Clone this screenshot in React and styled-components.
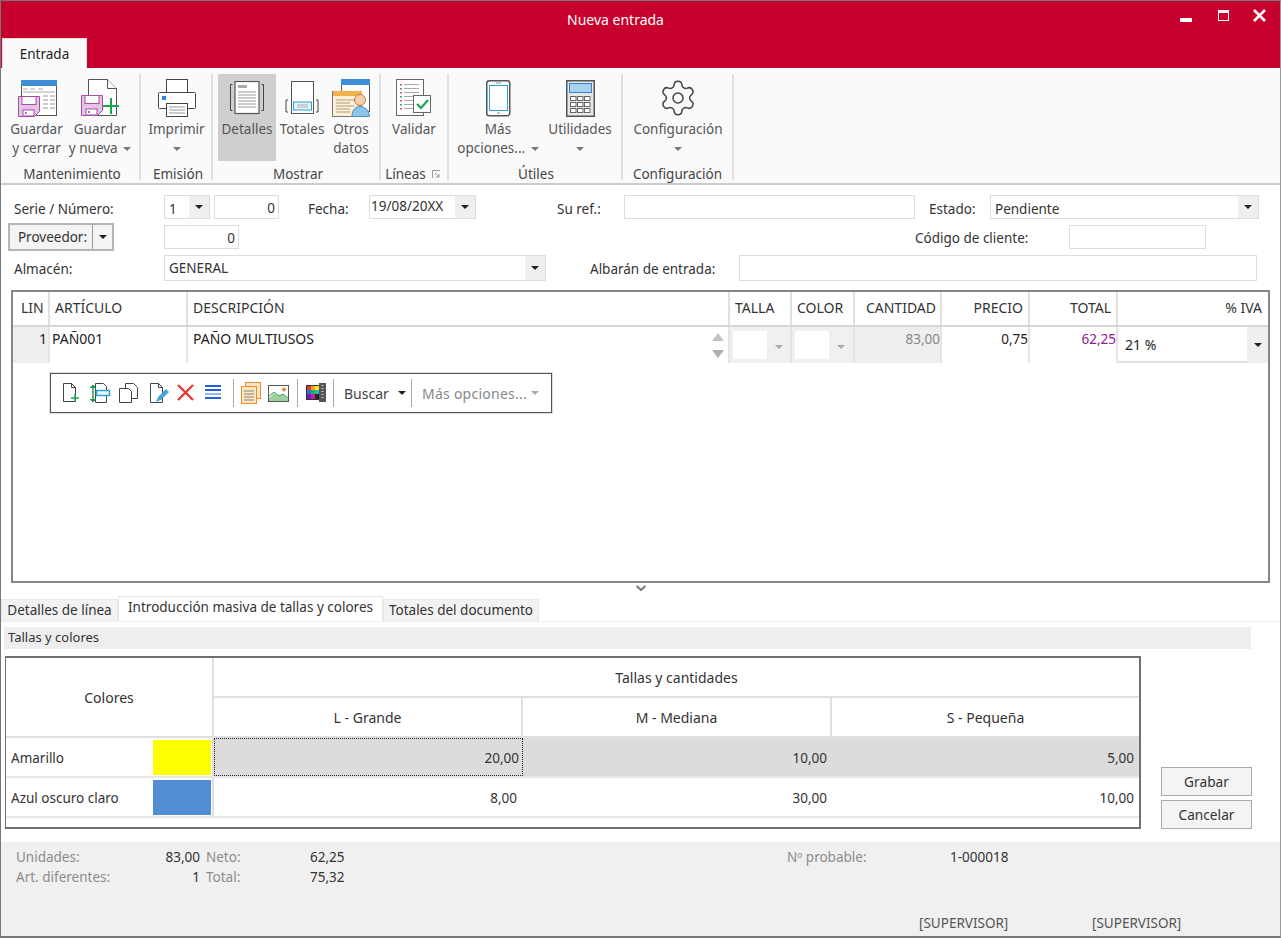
import React from 'react';
import styled, { createGlobalStyle } from 'styled-components';
import { Settings } from 'lucide-react';

const Global = createGlobalStyle`
  html, body { margin: 0; padding: 0; background: #fff; }
  * { box-sizing: border-box; }
`;

const Win = styled.div`
  width: 1281px; height: 938px; overflow: hidden; background: #fff;
  border: 1px solid #777; border-bottom-width: 2px; border-right: 1px solid #999;
  font-family: "Noto Sans", "Open Sans", sans-serif; font-size: 13.5px; color: #333;
  display: flex; flex-direction: column;
`;
const TitleBar = styled.div`
  height: 67px; background: #c8002d; flex: none; display: flex; flex-direction: column;
`;
const TitleRow = styled.div`
  height: 37px; display: flex; align-items: center; justify-content: center; position: relative;
  color: #fff; font-size: 14px; padding: 0 50px 1px 0;
`;
const WinControls = styled.div`
  position: absolute; right: 0; top: 0; height: 30px; display: flex; align-items: center;
`;
const RibbonTabs = styled.div`flex: 1; display: flex; align-items: flex-end; padding-left: 1px;`;
const RibbonTab = styled.div`
  width: 85px; height: 30px; background: #fafafa; border: 1px solid #ddd; border-bottom: 0;
  display: flex; align-items: center; justify-content: center; color: #222; font-size: 13.5px;
`;
const Ribbon = styled.div`
  height: 117px; flex: none; background: #fafafa; border-bottom: 2px solid #ccc; display: flex; padding-top: 6px;
`;
const Group = styled.div`
  width: ${p => p.$w}px; height: 106px; border-right: 2px solid #e0e0e0; display: flex; flex-direction: column;
  padding-left: ${p => p.$pl || 0}px;
`;
const GroupButtons = styled.div`height: 91px; display: flex; flex: none;`;
const GroupLabel = styled.div`
  flex: 1; display: flex; align-items: center; justify-content: center; gap: 6px; color: #444; padding-right: ${p => p.$pr || 0}px;
`;
const RibbonBtn = styled.div`
  width: ${p => p.$w}px; height: 87px; margin-left: ${p => p.$ml || 0}px; display: flex; flex-direction: column; align-items: center;
  background: ${p => p.$on ? '#cfcfcf' : 'transparent'}; color: #555; line-height: 19px; text-align: center; padding-top: 2px;
`;
const IconSlot = styled.div`height: 44px; flex: none; display: flex; align-items: center; justify-content: center; width: 100%; padding-left: ${p => p.$pl || 0}px;`;
const BtnText = styled.div`white-space: nowrap;`;
const Caret = styled.span`
  display: inline-block; width: 0; height: 0; border-left: 4px solid transparent; border-right: 4px solid transparent;
  border-top: 4px solid ${p => p.$c || '#777'}; vertical-align: middle; margin-left: ${p => p.$ml || 0}px;
`;

const Form = styled.div`
  display: flex; flex-direction: column; flex: none; padding-top: 10px; height: 105px;
`;
const FormRow = styled.div`
  height: ${p => p.$h}px; display: flex; align-items: center; padding-left: ${p => p.$pl ?? 13}px; flex: none;
`;
const Label = styled.div`
  width: ${p => p.$w}px; margin-left: ${p => p.$ml || 0}px; padding-top: ${p => p.$pt ?? 1}px; flex: none; color: #333; white-space: nowrap;
`;
const Input = styled.div`
  width: ${p => p.$w}px; height: ${p => p.$h || 24}px; margin-left: ${p => p.$ml || 0}px; flex: none; background: #fff; border: 1px solid #ddd;
  text-align: right; padding-right: 3px; line-height: 24px; color: #333;
`;
const Combo = styled.div`
  width: ${p => p.$w}px; height: ${p => p.$h || 24}px; margin-left: ${p => p.$ml || 0}px; flex: none; background: #fff; border: 1px solid #ddd;
  display: flex; align-items: stretch; padding-left: ${p => p.$pl ?? 4}px; color: #333;
`;
const ComboText = styled.div`flex: 1; white-space: nowrap; line-height: ${p => p.$lh || 24}px;`;
const ComboArrow = styled.div`
  width: 20px; background: #efefef; display: flex; align-items: center; justify-content: center;
`;
const SplitButton = styled.div`
  width: 106px; height: 28px; margin-right: 50px; border: 2px solid #b5b5b5; background: #f4f4f4; display: flex; flex: none;
`;
const SplitMain = styled.div`flex: 1; display: flex; align-items: center; justify-content: center; border-right: 1px solid #999; color: #333; padding-left: 3px;`;
const SplitArrow = styled.div`width: 19px; display: flex; align-items: center; justify-content: center;`;

const GridBox = styled.div`
  margin: 0 0 0 10px; width: 1259px; height: 293px; flex: none; border: 2px solid #868686; background: #fff;
  display: flex; flex-direction: column; font-size: 14px;
`;
const cols = '37px 138px 542px 62px 63px 87px 88px 88px 1fr';
const HeaderRow = styled.div`
  display: grid; grid-template-columns: ${cols}; height: 35px; flex: none; border-bottom: 2px solid #d6d6d6; color: #333;
`;
const HeadCell = styled.div`
  border-right: ${p => p.$last ? 0 : '2px solid #e0e0e0'}; padding: 0 ${p => p.$pr ?? 5}px 0 ${p => p.$pl ?? 5}px; line-height: 31px;
  text-align: ${p => p.$right ? 'right' : 'left'}; white-space: nowrap;
`;
const DataRow = styled.div`
  display: grid; grid-template-columns: ${cols}; height: 36px; flex: none; border-bottom: 2px solid #e0e0e0; color: #222;
`;
const DataCell = styled.div`
  border-right: 2px solid #e4e4e4; background: ${p => p.$bg || '#fff'}; color: ${p => p.$c || '#222'}; font-size: ${p => p.$fs || 14}px;
  text-align: ${p => p.$right ? 'right' : 'left'}; padding: 0 ${p => p.$pr ?? 0}px 0 ${p => p.$pl ?? 2}px; line-height: 24px; white-space: nowrap; position: relative;
`;
const DescCell = styled(DataCell)`display: flex; justify-content: space-between; padding-left: 5px;`;
const Spin = styled.div`width: 20px; display: flex; flex-direction: column; align-items: center; justify-content: center; gap: 9px; background: #fff;`;
const Tri = styled.span`
  width: 0; height: 0; border-left: 6px solid transparent; border-right: 6px solid transparent;
  ${p => p.$up ? 'border-bottom: 8px solid #c4c4c4;' : 'border-top: 8px solid #b0b0b0;'}
`;
const DisabledCombo = styled.div`
  background: #f0f0f0; border-right: 2px solid #e4e4e4; display: flex; align-items: center; padding: 0 0 0 3px; height: 100%;
`;
const WhiteBox = styled.div`width: ${p => p.$w}px; height: 28px; background: #fff; flex: none;`;
const DisabledArrow = styled.div`flex: 1; display: flex; justify-content: center; padding-top: 4px;`;
const IvaCell = styled.div`
  display: flex; align-items: stretch; padding-left: 7px; color: #222;
`;
const IvaText = styled.div`flex: 1; line-height: 36px;`;
const IvaArrow = styled.div`width: 21px; background: #efefef; display: flex; align-items: center; justify-content: center;`;

const FloatBar = styled.div`
  width: 502px; height: 40px; margin: 10px 0 0 37px; flex: none; border: 1px solid #555; background: #fff; display: flex; align-items: center; padding-left: 9px;
  box-shadow: 0 0 0 1px #ddd;
`;
const ToolIcon = styled.svg`width: 22px; height: 22px; flex: none; margin-right: ${p => p.$mr ?? 7}px;`;
const ToolSep = styled.div`width: 1px; height: 28px; background: #aaa; flex: none; margin: 0 ${p => p.$mr ?? 6}px 0 ${p => p.$ml ?? 0}px;`;
const ToolText = styled.div`
  color: ${p => p.$c || '#444'}; width: ${p => p.$w}px; flex: none; display: flex; align-items: center; justify-content: space-between; white-space: nowrap; padding-left: 4px; padding-right: 5px; letter-spacing: ${p => p.$ls || 0}px;
`;

const Chevron = styled.div`height: 14px; flex: none; display: flex; justify-content: center;`;
const Tabs = styled.div`display: flex; height: 25px; flex: none; align-items: flex-end; border-bottom: 1px solid #eee;`;
const Tab = styled.div`
  height: ${p => p.$on ? 25 : 22}px; width: ${p => p.$w}px; background: ${p => p.$on ? '#fff' : '#f2f2f2'}; border: 1px solid ${p => p.$on ? '#e4e4e4' : '#e8e8e8'}; border-bottom: 0;
  display: flex; justify-content: center; align-items: ${p => p.$on ? 'flex-start' : 'center'}; line-height: 21px; color: #333; white-space: nowrap;
`;
const SectionBar = styled.div`
  margin: 5px 0 0 3px; width: 1247px; height: 22px; flex: none; background: #eee; line-height: 21px; padding-left: 4px; color: #333; font-size: 13px;
`;
const Bottom = styled.div`display: flex; margin: 7px 0 0 4px; align-items: flex-end; flex: none;`;
const SizeGrid = styled.div`
  width: 1136px; height: 173px; border: 2px solid #707070; border-left-width: 1px; display: flex; flex-direction: column; background: #fff; flex: none; font-size: 14px;
`;
const SizeHead = styled.div`display: flex; height: 80px; flex: none; border-bottom: 2px solid #e0e0e0;`;
const ColorsHead = styled.div`width: 208px; flex: none; border-right: 2px solid #e0e0e0; display: flex; align-items: center; justify-content: center; color: #333;`;
const SizesHead = styled.div`flex: 1; display: flex; flex-direction: column;`;
const SizesTitle = styled.div`height: 40px; display: flex; align-items: center; justify-content: center; border-bottom: 2px solid #e0e0e0; color: #333;`;
const SizesRow = styled.div`flex: 1; display: grid; grid-template-columns: 309px 309px 1fr;`;
const SizeCol = styled.div`display: flex; align-items: center; justify-content: center; border-right: ${p => p.$last ? 0 : '2px solid #e0e0e0'}; color: #333;`;
const ColorRow = styled.div`display: flex; height: 40px; flex: none; border-bottom: 2px solid #e8e8e8;`;
const ColorName = styled.div`
  width: 208px; flex: none; border-right: 2px solid #e0e0e0; display: flex; align-items: center; justify-content: space-between; padding: 2px 1px 2px 5px; color: #333; font-size: 13.5px;
`;
const ColorLabel = styled.span`padding-top: 2px;`;
const Swatch = styled.div`width: 58px; height: 35px; background: ${p => p.$c}; flex: none;`;
const Qtys = styled.div`flex: 1; display: grid; grid-template-columns: 309px 309px 1fr; background: ${p => p.$bg || '#fff'}; font-size: 13.5px;`;
const Qty = styled.div`
  display: flex; align-items: center; justify-content: flex-end; padding: 2px ${p => p.$pr ?? 3}px 0 0; color: #333; border: 1px ${p => p.$focus ? 'dotted #222' : 'solid transparent'};
`;
const SideButtons = styled.div`display: flex; flex-direction: column; gap: 4px; margin-left: 20px;`;
const PushButton = styled.div`
  width: 91px; height: 29px; background: #f4f4f4; border: 1px solid #aaa; display: flex; align-items: center; justify-content: center; color: #333; font-size: 13.7px;
`;
const Footer = styled.div`
  flex: 1; margin-top: 13px; background: #f0f0f0; padding: 5px 0 0 15px; display: flex; flex-direction: column; line-height: 20px;
`;
const FootRow = styled.div`display: grid; grid-template-columns: 190px 104px 477px 163px 1fr;`;
const FootPair = styled.div`display: flex; justify-content: space-between; padding-right: 6px;`;
const Muted = styled.span`color: #8c8c8c;`;
const Val = styled.span`color: #333;`;
const Users = styled.div`display: flex; margin-top: 26px; padding-left: 903px; color: #555;`;
const UserName = styled.div`width: 173px;`;

const W = ({ children, ...p }) => <svg {...p}>{children}</svg>;

const Floppy = ({ x = 0, y = 0 }) => (
  <g transform={`translate(${x} ${y})`}>
    <path d="M.5.5h21v15l-5 5H.5z" fill="#e6c3e4" stroke="#a24fa5" />
    <rect x="4" y=".5" width="14" height="8" fill="#fff" stroke="#a24fa5" />
    <rect x="5" y="14" width="11" height="6" fill="#fff" stroke="#a24fa5" />
    <rect x="7" y="16" width="1.5" height="2" fill="#666" />
  </g>
);

const Ic = {
  saveClose: (
    <W width="41" height="40" viewBox="0 0 41 40">
      <rect x="3.5" y="2.5" width="35" height="35" fill="#fff" stroke="#555" />
      <rect x="3" y="2" width="36" height="6" fill="#3d8ed6" />
      <path d="M5 11h5M12 11h5M20 11h5M5 14h32" stroke="#aaa" />
      <path d="M25 18h5M32 18h5M25 22h5M32 22h5M25 26h5M32 26h5M25 30h5M32 30h5" stroke="#999" />
      <Floppy x="0" y="18" />
    </W>
  ),
  saveNew: (
    <W width="42" height="40" viewBox="0 0 42 40">
      <path d="M7.5 1.5h19l9 9v27h-28z" fill="#fff" stroke="#555" />
      <path d="M26.5 1.5v9h9" fill="#fff" stroke="#555" />
      <Floppy x="0" y="17" />
      <path d="M30 20v16M22 28h16" stroke="#18a84a" strokeWidth="2" />
    </W>
  ),
  print: (
    <W width="38" height="38" viewBox="0 0 38 38">
      <rect x="8.5" y=".5" width="21" height="14" fill="#fff" stroke="#444" />
      <rect x=".5" y="13.5" width="37" height="16" rx="1" fill="#fff" stroke="#444" />
      <rect x="4" y="17" width="4" height="4" fill="#2b86d8" />
      <rect x="8.5" y="24.5" width="21" height="13" fill="#fff" stroke="#444" />
      <path d="M11 28h16M11 31h16M11 34h16" stroke="#999" />
    </W>
  ),
  details: (
    <W width="36" height="34" viewBox="0 0 36 34">
      <path d="M3.5 3.5h-2v26h2M32.5 3.5h2v26h-2" fill="none" stroke="#444" />
      <rect x="6" y=".5" width="24" height="32" fill="#fff" stroke="#555" strokeWidth="1.2" />
      <rect x="9" y="4" width="9" height="3" fill="#aaa" />
      <path d="M9 11h18M9 14h18M9 17h18M9 20h18M9 23h18M9 26h18" stroke="#999" />
    </W>
  ),
  totals: (
    <W width="34" height="34" viewBox="0 0 34 34">
      <rect x="6.5" y=".5" width="22" height="32" fill="#fff" stroke="#555" />
      <path d="M3 19H1v12h2M31 19h2v12h-2" fill="none" stroke="#444" />
      <rect x="8.5" y="21" width="18" height="8" fill="#e8f4fc" stroke="#22a0e0" />
      <path d="M12 24h11M12 26h11" stroke="#aaa" />
    </W>
  ),
  others: (
    <W width="39" height="38" viewBox="0 0 39 38">
      <rect x="9.5" y=".5" width="28" height="32" fill="#fff" stroke="#555" />
      <rect x="9" y="0" width="29" height="6" fill="#3d8ed6" />
      <rect x=".5" y="12.5" width="29" height="25" fill="#fdf0d8" stroke="#777" />
      <rect x="1" y="12" width="29" height="5" fill="#f2b14a" />
      <path d="M4 21h18M4 24h14M4 27h18M4 30h14M4 33h14" stroke="#b09a78" />
      <path d="M20 37.5c0-7 4-10 8-10s9 3 9.5 10z" fill="#8dc4ea" stroke="#4b8fc2" />
      <circle cx="28" cy="21" r="5.5" fill="#f6cfa8" stroke="#b87a4c" />
    </W>
  ),
  validate: (
    <W width="36" height="38" viewBox="0 0 36 38">
      <rect x=".5" y=".5" width="27" height="36" fill="#fff" stroke="#666" />
      {[5, 9, 13, 17, 21, 25, 29].map((y, i) => (
        <g key={y}>
          <rect x="4" y={y} width="2" height="1.5" fill={i % 2 ? '#4aa860' : '#d9556a'} />
          <path d={`M8 ${y + .5}h15`} stroke="#aaa" />
        </g>
      ))}
      <rect x="17.5" y="16.5" width="17" height="17" fill="#fff" stroke="#666" />
      <path d="M21 25l4 4 7-8" fill="none" stroke="#1ea35a" strokeWidth="2.2" />
    </W>
  ),
  phone: (
    <W width="25" height="37" viewBox="0 0 25 37">
      <rect x=".75" y=".75" width="23" height="35" rx="2.5" fill="#fff" stroke="#555" strokeWidth="1.5" />
      <rect x="3.5" y="5.5" width="18" height="25" fill="#fff" stroke="#2f9be0" />
      <path d="M10 3h5" stroke="#888" />
      <path d="M11 33h3" stroke="#888" />
    </W>
  ),
  calc: (
    <W width="29" height="37" viewBox="0 0 29 37">
      <rect x=".75" y=".75" width="27.5" height="35.5" fill="#e8e8e8" stroke="#555" strokeWidth="1.5" />
      <rect x="3.5" y="3.5" width="22" height="9" fill="#a9d2f2" stroke="#2f86cc" />
      {[16, 22, 28].flatMap(y => [4, 11, 18].map(x => (
        <rect key={`${x}${y}`} x={x + .5} y={y + .5} width="5.5" height="4" fill="#fff" stroke="#666" />
      )))}
    </W>
  ),
  launcher: (
    <W width="9" height="9" viewBox="0 0 9 9">
      <path d="M.5 8V.5H8M3 3l4 4M7 4v3H4" fill="none" stroke="#999" />
    </W>
  ),
};

const Tools = {
  docAdd: <><path d="M3.5 1.5h8l4 4v14h-12z" fill="#fff" stroke="#444" /><path d="M11.5 1.5v4h4" fill="none" stroke="#444" /><path d="M15 12v8M11 16h8" stroke="#22a84c" strokeWidth="1.4" /></>,
  docMove: <><path d="M6.5 1.5h8l3 3v16h-11z" fill="#fff" stroke="#444" /><rect x="7.5" y="8.5" width="13" height="5" fill="#eaf5fd" stroke="#2a9ae0" strokeWidth="1.4" /><path d="M4 4v14" stroke="#1c9a4e" strokeWidth="1.4" /><path d="M1 6l3-3 3 3M1 17l3 3 3-3" fill="#1c9a4e" stroke="#1c9a4e" /></>,
  docCopy: <><path d="M7.5 1.5h8l4 4v11h-12z" fill="#fff" stroke="#444" /><path d="M1.5 6.5h9l3 3v11h-12z" fill="#fff" stroke="#444" /></>,
  docEdit: <><path d="M3.5 1.5h8l4 4v15h-12z" fill="#fff" stroke="#444" /><path d="M11.5 1.5v4h4" fill="none" stroke="#444" /><path d="M9 20l2-5 8-8 3 3-8 8z" fill="#4aa3dd" /></>,
  del: <path d="M2 3l15 15M17 3L2 18" stroke="#e43a36" strokeWidth="2.4" />,
  lines: <><path d="M0 4h16M0 16h16" stroke="#1f5fe0" strokeWidth="2" /><path d="M0 8h16" stroke="#1f5fe0" strokeWidth="2" /><path d="M0 12h16" stroke="#9bb6ee" strokeWidth="2" /></>,
  notes: <><rect x="5.5" y=".5" width="15" height="16" fill="#fbe3c8" stroke="#ee8a2a" /><rect x="1.5" y="4.5" width="15" height="17" fill="#fbe8c8" stroke="#ee8a2a" /><path d="M4 9h10M4 12h10M4 15h10M4 18h10" stroke="#8d8068" /></>,
  image: <><rect x=".5" y="3.5" width="20" height="16" fill="#fff" stroke="#555" /><path d="M1 16l5-5 5 3 4-2 5 5v2H1z" fill="#9fd0a2" /><path d="M1 14l5-4 5 4 4-2 5 4" fill="none" stroke="#3d9a58" /><circle cx="16" cy="7.5" r="2" fill="#f08a3c" /></>,
  colors: <><rect x="14" y="1" width="7" height="19" fill="#555" /><path d="M17.5 3v15" stroke="#ccc" strokeDasharray="1 2" strokeWidth="2" /><rect x="1" y="3" width="13" height="15" fill="#333" /><rect x="2" y="4" width="4" height="4" fill="#e53a2f" /><rect x="6" y="4" width="4" height="4" fill="#f5a623" /><rect x="10" y="4" width="4" height="4" fill="#f8e71c" /><rect x="2" y="8" width="4" height="4" fill="#2f6fe0" /><rect x="6" y="8" width="4" height="4" fill="#26b34a" /><rect x="10" y="8" width="4" height="4" fill="#1cc0c0" /><rect x="2" y="12" width="4" height="5" fill="#6a1fb0" /><rect x="6" y="12" width="4" height="5" fill="#c01fa0" /><rect x="10" y="12" width="4" height="5" fill="#222" /></>,
};
const Tool = ({ n, mr }) => <ToolIcon viewBox="0 0 22 22" $mr={mr}>{Tools[n]}</ToolIcon>;

const RBtn = ({ w, ml, on, icon, lines, ipl }) => (
  <RibbonBtn $w={w} $ml={ml} $on={on}>
    <IconSlot $pl={ipl}>{icon}</IconSlot>
    {lines.map((l, i) => <BtnText key={i}>{l}</BtnText>)}
  </RibbonBtn>
);

export default function App() {
  return (
    <Win>
      <Global />
      <TitleBar>
        <TitleRow>
          Nueva entrada
          <WinControls>
            <svg width="100" height="30" viewBox="0 0 100 30">
              <rect x="0" y="17" width="12" height="4" fill="#fff" />
              <rect x="38.5" y="9.5" width="10" height="10" fill="none" stroke="#fff" />
              <rect x="38" y="9" width="11" height="3" fill="#fff" />
              <path d="M74 9l11 11M85 9L74 20" stroke="#fff" strokeWidth="2.6" />
            </svg>
          </WinControls>
        </TitleRow>
        <RibbonTabs><RibbonTab>Entrada</RibbonTab></RibbonTabs>
      </TitleBar>
      <Ribbon>
        <Group $w={140} $pl={4}>
          <GroupButtons>
            <RBtn w={63} ipl={3} icon={Ic.saveClose} lines={['Guardar', 'y cerrar']} />
            <RBtn w={64} ipl={3} icon={Ic.saveNew} lines={[<>Guardar</>, <>y nueva <Caret $ml={2} /></>]} />
          </GroupButtons>
          <GroupLabel>Mantenimiento</GroupLabel>
        </Group>
        <Group $w={72} $pl={7}>
          <GroupButtons>
            <RBtn w={57} icon={Ic.print} lines={['Imprimir', <Caret />]} />
          </GroupButtons>
          <GroupLabel $pr={3}>Emisión</GroupLabel>
        </Group>
        <Group $w={168} $pl={5}>
          <GroupButtons>
            <RBtn w={58} on icon={Ic.details} lines={['Detalles']} />
            <RBtn w={52} icon={Ic.totals} lines={['Totales']} />
            <RBtn w={46} icon={Ic.others} lines={['Otros', 'datos']} />
          </GroupButtons>
          <GroupLabel $pr={1}>Mostrar</GroupLabel>
        </Group>
        <Group $w={68}>
          <GroupButtons>
            <RBtn w={66} icon={Ic.validate} lines={['Validar']} />
          </GroupButtons>
          <GroupLabel $pr={2}>Líneas {Ic.launcher}</GroupLabel>
        </Group>
        <Group $w={174} $pl={9}>
          <GroupButtons>
            <RBtn w={80} icon={Ic.phone} lines={['Más', <>opciones... <Caret $ml={2} /></>]} />
            <RBtn w={80} ml={2} icon={Ic.calc} lines={['Utilidades', <Caret />]} />
          </GroupButtons>
          <GroupLabel $pr={7}>Útiles</GroupLabel>
        </Group>
        <Group $w={111} $pl={5}>
          <GroupButtons>
            <RBtn w={100} icon={<Settings size={40} strokeWidth={.9} color="#444" />} lines={['Configuración', <Caret />]} />
          </GroupButtons>
          <GroupLabel $pr={5}>Configuración</GroupLabel>
        </Group>
      </Ribbon>
      <Form>
        <FormRow $h={24}>
          <Label $w={150} $pt={3}>Serie / Número:</Label>
          <Combo $w={46}><ComboText $lh={26}>1</ComboText><ComboArrow><Caret $c="#222" /></ComboArrow></Combo>
          <Input $ml={4} $w={65}>0</Input>
          <Label $ml={29} $w={61} $pt={3}>Fecha:</Label>
          <Combo $w={107} $pl={1}><ComboText $lh={20}>19/08/20XX</ComboText><ComboArrow><Caret $c="#222" /></ComboArrow></Combo>
          <Label $ml={81} $w={67} $pt={3}>Su ref.:</Label>
          <Input $w={291} />
          <Label $ml={14} $w={61} $pt={3}>Estado:</Label>
          <Combo $w={269}><ComboText $lh={26}>Pendiente</ComboText><ComboArrow><Caret $c="#222" /></ComboArrow></Combo>
        </FormRow>
        <FormRow $h={36} $pl={7}>
          <SplitButton><SplitMain>Proveedor:</SplitMain><SplitArrow><Caret $c="#222" /></SplitArrow></SplitButton>
          <Input $w={75}>0</Input>
          <Label $ml={676} $w={155}>Código de cliente:</Label>
          <Input $ml={-1} $w={137} />
        </FormRow>
        <FormRow $h={26}>
          <Label $w={150}>Almacén:</Label>
          <Combo $w={382} $h={26}><ComboText $lh={25}>GENERAL</ComboText><ComboArrow><Caret $c="#222" /></ComboArrow></Combo>
          <Label $ml={44} $w={149}>Albarán de entrada:</Label>
          <Input $w={518} $h={26} />
        </FormRow>
      </Form>
      <GridBox>
        <HeaderRow>
          <HeadCell $pl={8} $pr={0}>LIN</HeadCell>
          <HeadCell>ARTÍCULO</HeadCell>
          <HeadCell>DESCRIPCIÓN</HeadCell>
          <HeadCell>TALLA</HeadCell>
          <HeadCell>COLOR</HeadCell>
          <HeadCell $right $pl={0} $pr={4}>CANTIDAD</HeadCell>
          <HeadCell $right>PRECIO</HeadCell>
          <HeadCell $right>TOTAL</HeadCell>
          <HeadCell $right $last $pr={6}>% IVA</HeadCell>
        </HeaderRow>
        <DataRow>
          <DataCell $bg="#eeeeee" $right $pr={1}>1</DataCell>
          <DataCell>PAÑ001</DataCell>
          <DescCell>
            <span>PAÑO MULTIUSOS</span>
            <Spin><Tri $up /><Tri /></Spin>
          </DescCell>
          <DisabledCombo><WhiteBox $w={34} /><DisabledArrow><Caret $c="#aaa" /></DisabledArrow></DisabledCombo>
          <DisabledCombo><WhiteBox $w={34} /><DisabledArrow><Caret $c="#aaa" /></DisabledArrow></DisabledCombo>
          <DataCell $bg="#eeeeee" $c="#888" $right $fs={13.5}>83,00</DataCell>
          <DataCell $right $fs={13.5}>0,75</DataCell>
          <DataCell $c="#90208f" $right $fs={13.5}>62,25</DataCell>
          <IvaCell><IvaText>21 %</IvaText><IvaArrow><Caret $c="#222" /></IvaArrow></IvaCell>
        </DataRow>
        <FloatBar>
          <Tool n="docAdd" />
          <Tool n="docMove" />
          <Tool n="docCopy" />
          <Tool n="docEdit" />
          <Tool n="del" />
          <Tool n="lines" mr={2} />
          <ToolSep $ml={4} />
          <Tool n="notes" mr={6} />
          <Tool n="image" mr={7} />
          <ToolSep $mr={7} />
          <Tool n="colors" mr={6} />
          <ToolSep />
          <ToolText $w={71}>Buscar <Caret $c="#222" /></ToolText>
          <ToolSep $mr={6} />
          <ToolText $c="#888" $w={126} $ls={.25}>Más opciones... <Caret $c="#aaa" /></ToolText>
        </FloatBar>
      </GridBox>
      <Chevron>
        <svg width="12" height="12" viewBox="0 0 12 12"><path d="M1.5 3l4.5 4 4.5-4" fill="none" stroke="#777" strokeWidth="2" /></svg>
      </Chevron>
      <Tabs>
        <Tab $w={117}>Detalles de línea</Tab>
        <Tab $on $w={265}>Introducción masiva de tallas y colores</Tab>
        <Tab $w={156}>Totales del documento</Tab>
      </Tabs>
      <SectionBar>Tallas y colores</SectionBar>
      <Bottom>
        <SizeGrid>
          <SizeHead>
            <ColorsHead>Colores</ColorsHead>
            <SizesHead>
              <SizesTitle>Tallas y cantidades</SizesTitle>
              <SizesRow>
                <SizeCol>L - Grande</SizeCol>
                <SizeCol>M - Mediana</SizeCol>
                <SizeCol $last>S - Pequeña</SizeCol>
              </SizesRow>
            </SizesHead>
          </SizeHead>
          <ColorRow>
            <ColorName><ColorLabel>Amarillo</ColorLabel><Swatch $c="#ffff00" /></ColorName>
            <Qtys $bg="#dcdcdc">
              <Qty $focus $pr={3}>20,00</Qty>
              <Qty $pr={4}>10,00</Qty>
              <Qty $pr={4}>5,00</Qty>
            </Qtys>
          </ColorRow>
          <ColorRow>
            <ColorName><ColorLabel>Azul oscuro claro</ColorLabel><Swatch $c="#528dd6" /></ColorName>
            <Qtys>
              <Qty $pr={5}>8,00</Qty>
              <Qty $pr={4}>30,00</Qty>
              <Qty $pr={4}>10,00</Qty>
            </Qtys>
          </ColorRow>
        </SizeGrid>
        <SideButtons>
          <PushButton>Grabar</PushButton>
          <PushButton>Cancelar</PushButton>
        </SideButtons>
      </Bottom>
      <Footer>
        <FootRow>
          <FootPair><Muted>Unidades:</Muted><Val>83,00</Val></FootPair>
          <Muted>Neto:</Muted><Val>62,25</Val>
          <Muted>Nº probable:</Muted><Val>1-000018</Val>
        </FootRow>
        <FootRow>
          <FootPair><Muted>Art. diferentes:</Muted><Val>1</Val></FootPair>
          <Muted>Total:</Muted><Val>75,32</Val>
        </FootRow>
        <Users><UserName>[SUPERVISOR]</UserName><UserName>[SUPERVISOR]</UserName></Users>
      </Footer>
    </Win>
  );
}
